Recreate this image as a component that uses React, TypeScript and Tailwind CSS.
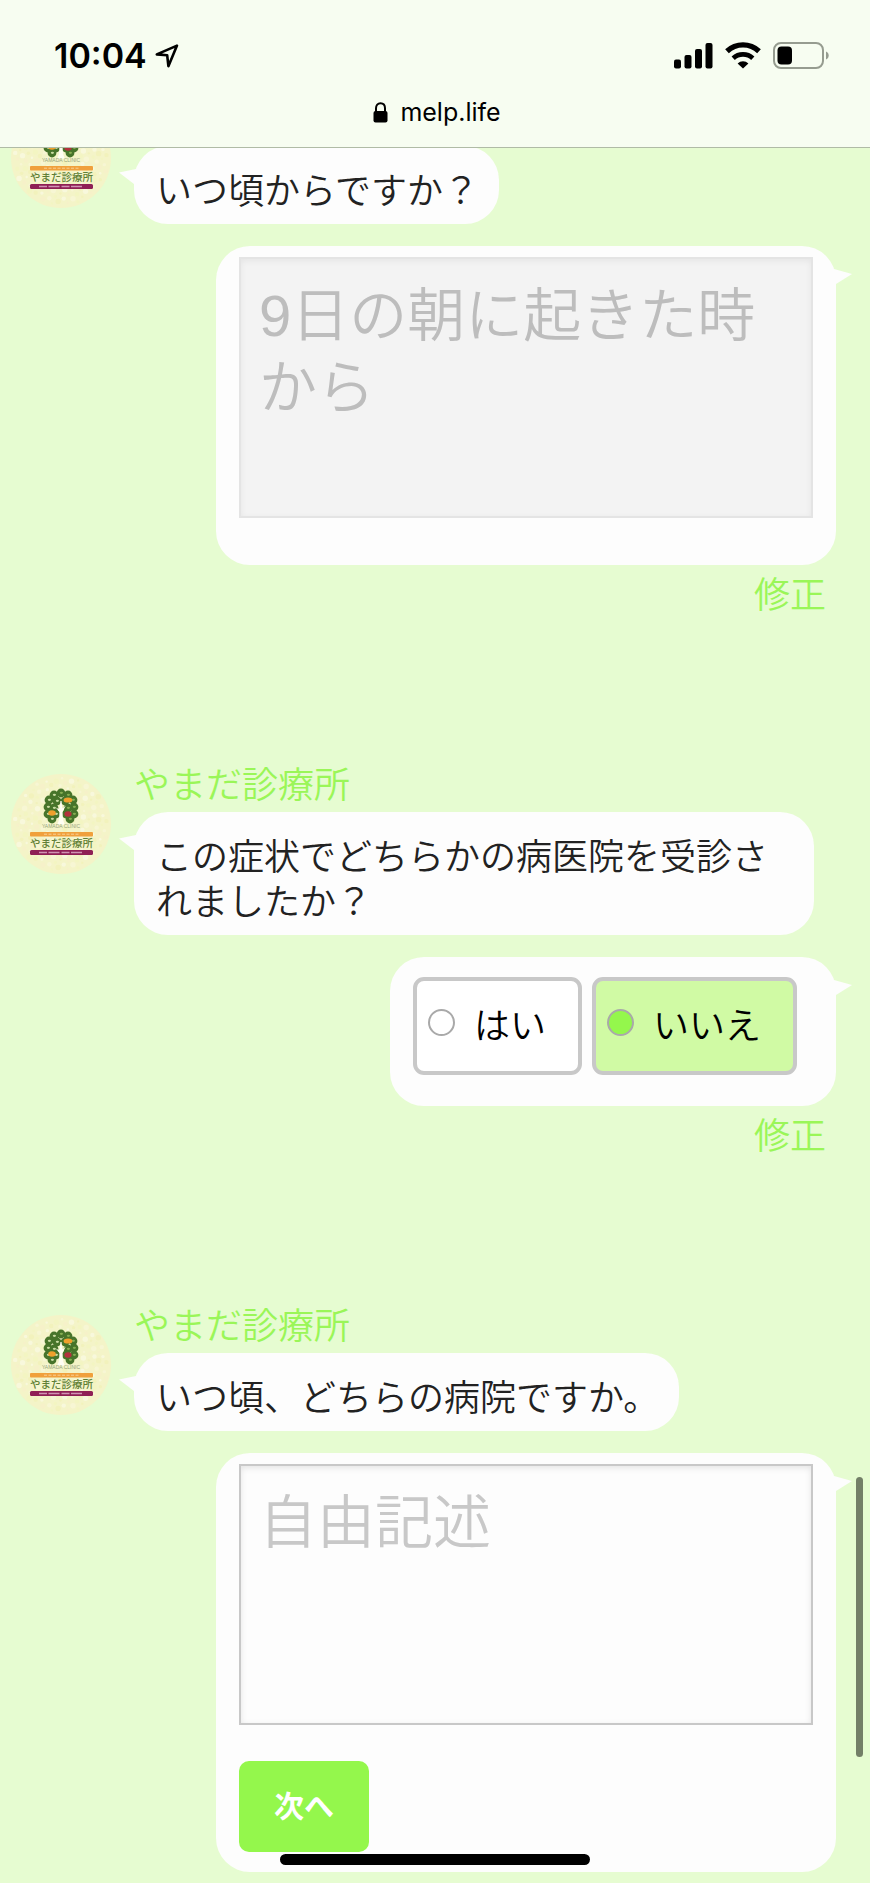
import type { ReactNode } from 'react';

const CLINIC = 'やまだ診療所';

const options = [
  { value: 'yes', label: 'はい' },
  { value: 'no', label: 'いいえ' },
];

// leaf clusters of the clinic's tree mark
const leaves = [
  [50, 19], [43, 21], [57, 21], [38, 26], [62, 26], [46, 27], [54, 27], [37, 33],
  [63, 33], [43, 34], [57, 34], [37, 40], [63, 40], [41, 45], [59, 45], [45, 40], [55, 40],
];

const speckles = Array.from({ length: 190 }, (_, i) => {
  const radius = Math.sqrt((i + 0.5) / 190) * 47;
  const angle = i * 2.39996;
  return {
    x: 50 + radius * Math.cos(angle),
    y: 50 + radius * Math.sin(angle),
    r: 1.2 + (i % 4) * 0.5,
    fill: ['#f7f6d4', '#f2f2bc', '#f6f1c9', '#f3f5c2', '#f8f8dc'][(i * 7) % 5],
  };
});

export default function App() {
  return (
    <div className="relative min-h-screen overflow-hidden bg-[#e6fcd1] font-['Liberation_Sans','Noto_Sans_CJK_JP',sans-serif]">
      <BrowserHeader />

      <main className="flex flex-col gap-[145px] pt-[97px] pb-[11px]">
        <section>
          <Question>いつ頃からですか？</Question>
          <Answer wide>
            <div className="px-[23px] pt-[11px] pb-[47px]">
              <textarea
                aria-label="いつ頃からですか？"
                disabled
                defaultValue="9日の朝に起きた時から"
                className="block h-[261px] w-full resize-none overflow-hidden border-2 border-[#e4e4e4] bg-[#f3f3f3] px-[18px] py-[21px] text-[58px] leading-[72px] font-[350] text-[#bdbdbd] shadow-[inset_0_2px_6px_rgba(0,0,0,0.06)]"
              />
            </div>
          </Answer>
          <EditLink />
        </section>

        <section>
          <Question>この症状でどちらかの病医院を受診されましたか？</Question>
          <Answer>
            <fieldset className="flex gap-[10px] pt-5 pr-[39px] pb-[31px] pl-[23px]">
              {options.map((option) => (
                <label
                  key={option.value}
                  className="flex h-[98px] items-center rounded-[11px] border-4 border-[#c8c8c8] bg-white pr-8 pl-[11px] text-[36px] leading-[45px] font-[350] text-black has-checked:bg-[#d0faa4]"
                >
                  <input
                    type="radio"
                    name="visited"
                    value={option.value}
                    defaultChecked={option.value === 'no'}
                    className="mr-[19px] mb-2 size-[27px] appearance-none rounded-full border-2 border-[#a9a9a9] bg-white checked:bg-[#94f74c]"
                  />
                  {option.label}
                </label>
              ))}
            </fieldset>
          </Answer>
          <EditLink />
        </section>

        <section>
          <Question>いつ頃、どちらの病院ですか。</Question>
          <Answer wide>
            <div className="px-[23px] pt-[11px] pb-5">
              <textarea
                aria-label="いつ頃、どちらの病院ですか。"
                placeholder="自由記述"
                className="block h-[261px] w-full resize-none overflow-hidden border-2 border-[#c8c8c8] bg-[#fdfdfd] px-[18px] py-[21px] text-[58px] leading-[72px] font-[350] shadow-[inset_0_2px_6px_rgba(0,0,0,0.1)] placeholder:text-[#c8c8c8]"
              />
              <button
                type="button"
                className="mt-9 h-[91px] rounded-[10px] bg-[#94f74c] px-[35px] text-[30px] leading-[45px] font-bold text-white"
              >
                次へ
              </button>
            </div>
          </Answer>
        </section>
      </main>

      <div className="fixed top-[1477px] right-[7px] h-[280px] w-[7px] rounded-full bg-[#737f67]" />
      <div className="fixed bottom-[18px] left-1/2 h-[11px] w-[310px] -translate-x-1/2 rounded-full bg-black" />
    </div>
  );
}

function BrowserHeader() {
  return (
    <header className="fixed inset-x-0 top-0 z-10 border-b border-[#b0bba6] bg-[#f7fdf1] pt-[33px] pb-[17px] font-['Inter',sans-serif] text-black">
      <div className="flex h-[45px] items-center justify-between pr-[41px] pl-[54px]">
        <div className="flex items-center gap-2">
          <span className="text-[34px] leading-[45px] font-semibold">10:04</span>
          <svg width="24" height="24" viewBox="0 0 24 24" fill="none" aria-hidden="true">
            <path
              d="M22 1.6 1.8 10.4l10.4.9 1.2 10.9z"
              stroke="#000"
              strokeWidth="2.6"
              strokeLinejoin="round"
            />
          </svg>
        </div>
        <div className="flex items-center gap-3">
          <svg width="39" height="27" viewBox="0 0 39 27" aria-hidden="true">
            <rect x="0" y="17.5" width="7" height="9" rx="2" />
            <rect x="10.5" y="13" width="7" height="13.5" rx="2" />
            <rect x="21" y="7" width="7" height="19.5" rx="2" />
            <rect x="31.5" y="1" width="7" height="25.5" rx="2" />
          </svg>
          <svg width="36" height="27" viewBox="0 0 36 27" fill="none" aria-hidden="true">
            <path d="M2 9.2a23.5 23.5 0 0 1 32 0" stroke="#000" strokeWidth="5.4" />
            <path d="M8.2 16.2a14.6 14.6 0 0 1 19.6 0" stroke="#000" strokeWidth="4.8" />
            <path d="M18 26.6l-5.4-5.2a7.8 7.8 0 0 1 10.8 0z" fill="#000" />
          </svg>
          <svg width="56" height="27" viewBox="0 0 56 27" fill="none" aria-hidden="true">
            <rect x="1" y="1" width="49" height="25" rx="7" stroke="#969c90" strokeWidth="2" />
            <rect x="4.5" y="4.5" width="14.5" height="18" rx="4" fill="#000" />
            <path d="M53 9.5c3.6 1.2 3.6 6.8 0 8z" fill="#969c90" />
          </svg>
        </div>
      </div>
      <div className="mt-4 flex h-9 items-center justify-center gap-3 pl-1">
        <svg width="15" height="21" viewBox="0 0 15 21" fill="none" aria-hidden="true">
          <path d="M3 11V6.2C3 3.2 4.8 1.2 7.5 1.2S12 3.2 12 6.2V11" stroke="#000" strokeWidth="2" />
          <rect x="0.5" y="9" width="14" height="11.5" rx="2" fill="#000" />
        </svg>
        <span className="text-[25px] leading-9">melp.life</span>
      </div>
    </header>
  );
}

function Question({ children }: { children: ReactNode }) {
  return (
    <div className="flex gap-[23px] pr-14 pl-[11px]">
      <ClinicAvatar />
      <div>
        <p className="text-[36px] leading-[45px] font-[350] text-[#9af658]">{CLINIC}</p>
        <div className="relative mt-1 w-fit rounded-[34px] bg-[#fdfdfd] pt-[23px] pr-5 pb-[10px] pl-[22px]">
          <svg className="absolute top-[17px] -left-[15px]" width="24" height="24" viewBox="0 0 24 24" aria-hidden="true">
            <path d="M0 9.5 17 6l5 15-7 0z" fill="#fdfdfd" />
          </svg>
          <p className="relative text-[36px] leading-[45px] font-[350] text-[#222]">{children}</p>
        </div>
      </div>
    </div>
  );
}

function Answer({ wide, children }: { wide?: boolean; children: ReactNode }) {
  return (
    <div className="mt-[22px] flex justify-end pr-[34px] pl-[216px]">
      <div className={`relative rounded-[34px] bg-[#fdfdfd] ${wide ? 'w-full' : ''}`}>
        <svg className="absolute top-[17px] -right-4" width="24" height="24" viewBox="0 0 24 24" aria-hidden="true">
          <path d="M24 11 6 6 2 21l6 0z" fill="#fdfdfd" />
        </svg>
        {children}
      </div>
    </div>
  );
}

function EditLink() {
  return (
    <div className="mt-2 flex justify-end pr-11">
      <a href="#edit" className="text-[36px] leading-[45px] font-[350] text-[#9af658]">
        修正
      </a>
    </div>
  );
}

function ClinicAvatar() {
  return (
    <svg className="mt-[11px] size-[100px] shrink-0" viewBox="0 0 100 100" role="img" aria-label={CLINIC}>
      <circle cx="50" cy="50" r="50" fill="#f4f4c8" />
      {speckles.map((dot, i) => (
        <circle key={i} cx={dot.x} cy={dot.y} r={dot.r} fill={dot.fill} />
      ))}
      {leaves.map(([x, y], i) => (
        <circle key={i} cx={x} cy={y} r="4.4" fill="#47742a" />
      ))}
      {leaves.map(([x, y], i) => (
        <ellipse key={i} cx={x + 0.4} cy={y - 0.2} rx="1.6" ry="1.1" fill={i % 2 ? '#c9dba2' : '#86ad52'} />
      ))}
      <ellipse cx="57" cy="26" rx="4.4" ry="2.6" fill="#f0a02c" />
      <ellipse cx="41" cy="39" rx="3.8" ry="2.8" fill="#f0a02c" />
      <ellipse cx="57" cy="40" rx="3.6" ry="2.8" fill="#b3323c" />
      <path
        d="M49.4 27h1.2l.6 7.6 3.6-3-3.2 6.4.3 7.5 1.8 5H46.3l1.8-5 .3-7.5-3.6-4.4 3.8 2z"
        fill="#fffef2"
      />
      <text x="50" y="54" textAnchor="middle" className="fill-[#97a67c] text-[5px]">
        YAMADA CLINIC
      </text>
      <rect x="19" y="58" width="63" height="4.5" rx="1" fill="#f0a03c" />
      <path d="M33 60.2h35" stroke="#f8cf94" strokeWidth="1" strokeDasharray="3 1.5" />
      <text x="50.5" y="73" textAnchor="middle" className="fill-[#5f7f35] text-[10.5px] font-medium">
        {CLINIC}
      </text>
      <rect x="19" y="76" width="63" height="5" rx="1.5" fill="#8f1f55" />
      <path d="M28 78.5h44" stroke="#cf93b2" strokeWidth="1.6" strokeDasharray="8 1.5 11 2" />
    </svg>
  );
}
